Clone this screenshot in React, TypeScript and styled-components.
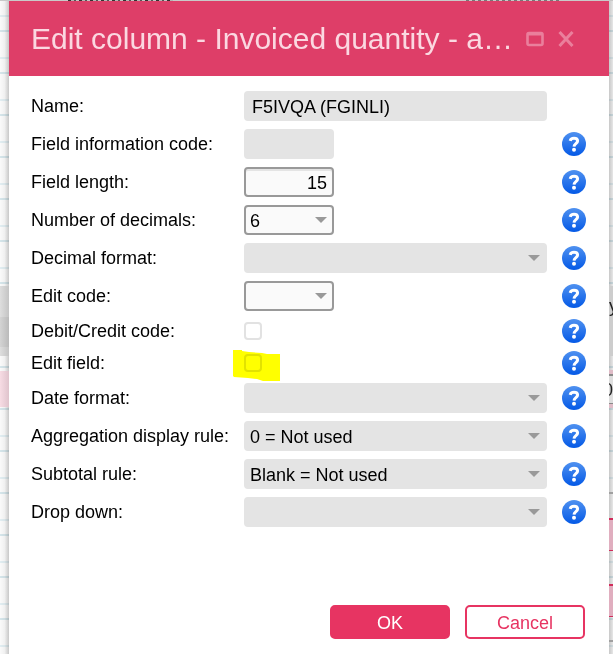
import React, { useId } from 'react';
import styled, { createGlobalStyle, css } from 'styled-components';

const GlobalStyle = createGlobalStyle`
  *, *::before, *::after { box-sizing: border-box; }
  html, body { margin: 0; padding: 0; background: #f4f4f4; }
  body, button, input, select { font-family: "Liberation Sans", Arial, sans-serif; font-size: 18px; }
`;

const Page = styled.div`
  display: grid;
  grid-template-columns: 9px minmax(0, 1fr) 4px;
  grid-template-rows: 1px auto;
  min-height: 100vh;
  overflow: hidden;
`;

const TopStrip = styled.div`
  grid-column: 1 / -1;
  background:
    repeating-linear-gradient(90deg, #333 0 3px, #b5b5b5 3px 6px, #555 6px 8px, #c4c4c4 8px 11px) 68px 0 / 105px 1px no-repeat,
    repeating-linear-gradient(90deg, #777 0 3px, #c8c8c8 3px 6px) 466px 0 / 96px 1px no-repeat,
    #c9c9c9;
`;

const Gutter = styled.div<{ $side: 'left' | 'right' }>`
  display: flex;
  flex-direction: column;
  min-width: 0;
  overflow: hidden;
  background:
    ${({ $side }) =>
      $side === 'left'
        ? 'linear-gradient(90deg, rgba(0,0,0,0) 0, rgba(0,0,0,.04) 50%, rgba(0,0,0,.2) 100%)'
        : 'linear-gradient(90deg, rgba(0,0,0,.2) 0, rgba(0,0,0,.08) 100%)'},
    repeating-linear-gradient(180deg, transparent 0 14px, #e2eef2 14px 16px, transparent 16px 29px, #d6e6eb 29px 31px, transparent 31px 42px) 0 0,
    #fafafa;
`;

const Band = styled.div<{ $h: number; $gap: number; $color: string; $edge?: string }>`
  display: flex;
  align-items: center;
  flex: none;
  height: ${({ $h }) => $h}px;
  margin-top: ${({ $gap }) => $gap}px;
  background: ${({ $color }) => $color};
  ${({ $edge }) => $edge && css`
    border-top: 2px solid ${$edge};
    border-bottom: 1px solid ${$edge};
  `}
  color: #222;
`;

const Clipped = styled.span<{ $end?: boolean }>`
  display: flex;
  justify-content: ${({ $end }) => ($end ? 'flex-end' : 'flex-start')};
  width: 4px;
  line-height: 24px;
`;

const Dialog = styled.section`
  display: flex;
  flex-direction: column;
  min-width: 0;
  background: #fff;
`;

const Header = styled.header`
  display: flex;
  align-items: center;
  height: 75px;
  padding: 0 34px 0 22px;
  background: #de3e68;
  color: #fbd8e1;
`;

const Title = styled.h1`
  flex: 1;
  margin: 0;
  font-size: 30px;
  line-height: 36px;
  font-weight: 400;
  white-space: nowrap;
`;

const IconButton = styled.button`
  display: flex;
  padding: 0;
  margin-left: 13px;
  border: 0;
  background: none;
  color: #ea7f9c;
`;

const Form = styled.form`
  display: flex;
  flex-direction: column;
  gap: 8px;
  padding: 15px 23px 15px 22px;
`;

const Row = styled.div<{ $compact?: boolean }>`
  display: grid;
  grid-template-columns: 213px minmax(0, 1fr) 24px;
  align-items: center;
  height: ${({ $compact }) => ($compact ? 24 : 30)}px;
`;

const Label = styled.label`
  line-height: 24px;
  color: #000;
  white-space: nowrap;
`;

const Control = styled.div<{ $narrow?: boolean }>`
  position: relative;
  display: flex;
  align-items: center;
  margin-right: 15px;
  ${({ $narrow }) => $narrow && 'width: 90px;'}
`;

const fieldLook = css<{ $active?: boolean }>`
  width: 100%;
  height: 30px;
  margin: 0;
  border: 2px solid ${({ $active }) => ($active ? '#999' : '#e4e4e4')};
  border-radius: 4px;
  background: ${({ $active }) => ($active ? '#fafafa' : '#e4e4e4')};
  color: #000;
  opacity: 1;
  outline: 0;
`;

const TextBox = styled.input<{ $active?: boolean }>`
  ${fieldLook}
  padding: 2px 6px 0;
  ${({ $active }) => $active && css`
    padding: 2px 5px 0;
    text-align: right;
    box-shadow: inset 0 2px 0 #e4e4e4;
  `}
`;

const SelectBox = styled.select<{ $active?: boolean }>`
  ${fieldLook}
  appearance: none;
  padding: 2px 24px 0 4px;
`;

const Arrow = styled.svg`
  position: absolute;
  right: 7px;
  top: 12px;
  pointer-events: none;
`;

const Check = styled.input`
  appearance: none;
  width: 18px;
  height: 18px;
  margin: 0;
  border: 2px solid #e2e2e2;
  border-radius: 4px;
  background: #fff;
`;

const Marker = styled.svg`
  position: absolute;
  left: -11px;
  top: -4px;
  mix-blend-mode: multiply;
  pointer-events: none;
`;

const HelpButton = styled.button`
  display: flex;
  grid-column: 3;
  width: 24px;
  height: 24px;
  padding: 0;
  border: 0;
  border-radius: 50%;
  background: linear-gradient(#4f91f0, #0459e6);
`;

const Actions = styled.div`
  display: flex;
  justify-content: flex-end;
  gap: 15px;
  margin-top: 70px;
  padding-right: 1px;
`;

const Button = styled.button<{ $primary?: boolean }>`
  width: 120px;
  height: 34px;
  padding: 2px 0 0;
  border: 2px solid #e73462;
  border-radius: 5px;
  background: ${({ $primary }) => ($primary ? '#e73462' : '#fff')};
  color: ${({ $primary }) => ($primary ? '#fff' : '#e73462')};
`;

type Field = {
  label: string;
  kind: 'text' | 'select' | 'check';
  value?: string;
  active?: boolean;
  narrow?: boolean;
  noHelp?: boolean;
  marked?: boolean;
};

const fields: Field[] = [
  { label: 'Name:', kind: 'text', value: 'F5IVQA (FGINLI)', noHelp: true },
  { label: 'Field information code:', kind: 'text', narrow: true },
  { label: 'Field length:', kind: 'text', value: '15', active: true, narrow: true },
  { label: 'Number of decimals:', kind: 'select', value: '6', active: true, narrow: true },
  { label: 'Decimal format:', kind: 'select' },
  { label: 'Edit code:', kind: 'select', active: true, narrow: true },
  { label: 'Debit/Credit code:', kind: 'check' },
  { label: 'Edit field:', kind: 'check', marked: true },
  { label: 'Date format:', kind: 'select' },
  { label: 'Aggregation display rule:', kind: 'select', value: '0 = Not used' },
  { label: 'Subtotal rule:', kind: 'select', value: 'Blank = Not used' },
  { label: 'Drop down:', kind: 'select' },
];

function Help({ about }: { about: string }) {
  return (
    <HelpButton type="button" aria-label={`Help: ${about}`}>
      <svg width="24" height="24" viewBox="0 0 24 24" fill="none">
        <path d="M8.2 8.8C8.6 7 10 6.2 12 6.2c2.2 0 3.6 1 3.6 2.8 0 2.6-3.5 2.6-3.6 5.6" stroke="#fff" strokeWidth="3" />
        <circle cx="12" cy="17.8" r="2" fill="#fff" />
      </svg>
    </HelpButton>
  );
}

function FieldRow({ field }: { field: Field }) {
  const id = useId();
  const { label, kind, value = '', active, narrow, noHelp, marked } = field;
  return (
    <Row $compact={kind === 'check'}>
      <Label htmlFor={id}>{label}</Label>
      <Control $narrow={narrow}>
        {kind === 'text' && <TextBox id={id} type="text" defaultValue={value} disabled={!active} $active={active} />}
        {kind === 'select' && (
          <>
            <SelectBox id={id} defaultValue={value} disabled={!active} $active={active}>
              <option value={value}>{value}</option>
            </SelectBox>
            <Arrow width="12" height="6" viewBox="0 0 12 6">
              <path d="M0 0h12L6 6z" fill="#999" />
            </Arrow>
          </>
        )}
        {kind === 'check' && <Check id={id} type="checkbox" disabled />}
        {marked && (
          <Marker width="47" height="31" viewBox="0 0 47 31">
            <path d="M0 0h9v1l7 1 13 1 5 1h13v27H30l-6-2-9-1-14-1-1-1z" fill="#ff0" />
          </Marker>
        )}
      </Control>
      {!noHelp && <Help about={label} />}
    </Row>
  );
}

export default function App() {
  return (
    <>
      <GlobalStyle />
      <Page>
        <TopStrip />
        <Gutter $side="left">
          <Band $gap={285} $h={31} $color="linear-gradient(90deg, #dedede, #c4c4c4)" />
          <Band $gap={0} $h={30} $color="linear-gradient(90deg, #d4d4d4, #bababa)" />
          <Band $gap={0} $h={9} $color="linear-gradient(90deg, #dedede, #c4c4c4)" />
          <Band $gap={15} $h={36} $color="linear-gradient(90deg, #f7dce4, #dfc3cc)" />
        </Gutter>
        <Dialog role="dialog" aria-labelledby="dialog-title">
          <Header>
            <Title id="dialog-title">Edit column - Invoiced quantity - a…</Title>
            <IconButton type="button" aria-label="Maximize">
              <svg width="18" height="16" viewBox="0 0 18 16" fill="none" stroke="currentColor">
                <rect x="1.5" y="2" width="15" height="12" rx="1.5" strokeWidth="2.6" />
                <path d="M1.5 3h15" strokeWidth="3" />
              </svg>
            </IconButton>
            <IconButton type="button" aria-label="Close">
              <svg width="18" height="16" viewBox="0 0 18 16" fill="none" stroke="currentColor" strokeWidth="3">
                <path d="M2.5 1l13 14M15.500 1l-13 14" />
              </svg>
            </IconButton>
          </Header>
          <Form onSubmit={(e) => e.preventDefault()}>
            {fields.map((field) => (
              <FieldRow key={field.label} field={field} />
            ))}
            <Actions>
              <Button type="submit" $primary>OK</Button>
              <Button type="button">Cancel</Button>
            </Actions>
          </Form>
        </Dialog>
        <Gutter $side="right">
          <Band $gap={285} $h={40} $color="#cdcdcd">
            <Clipped>y</Clipped>
          </Band>
          <Band $gap={0} $h={30} $color="#cdcdcd" />
          <Band $gap={14} $h={4} $color="#dfbcc7" />
          <Band $gap={0} $h={30} $color="#dedede" $edge="#8a8a8a">
            <Clipped $end>0</Clipped>
          </Band>
          <Band $gap={0} $h={4} $color="#dfbcc7" />
          <Band $gap={84} $h={2} $color="#a0a0a0" />
          <Band $gap={24} $h={33} $color="#e0aebf" $edge="#d02c5a" />
          <Band $gap={33} $h={33} $color="#e0aebf" $edge="#d02c5a" />
          <Band $gap={23} $h={2} $color="#a0a0a0" />
        </Gutter>
      </Page>
    </>
  );
}
